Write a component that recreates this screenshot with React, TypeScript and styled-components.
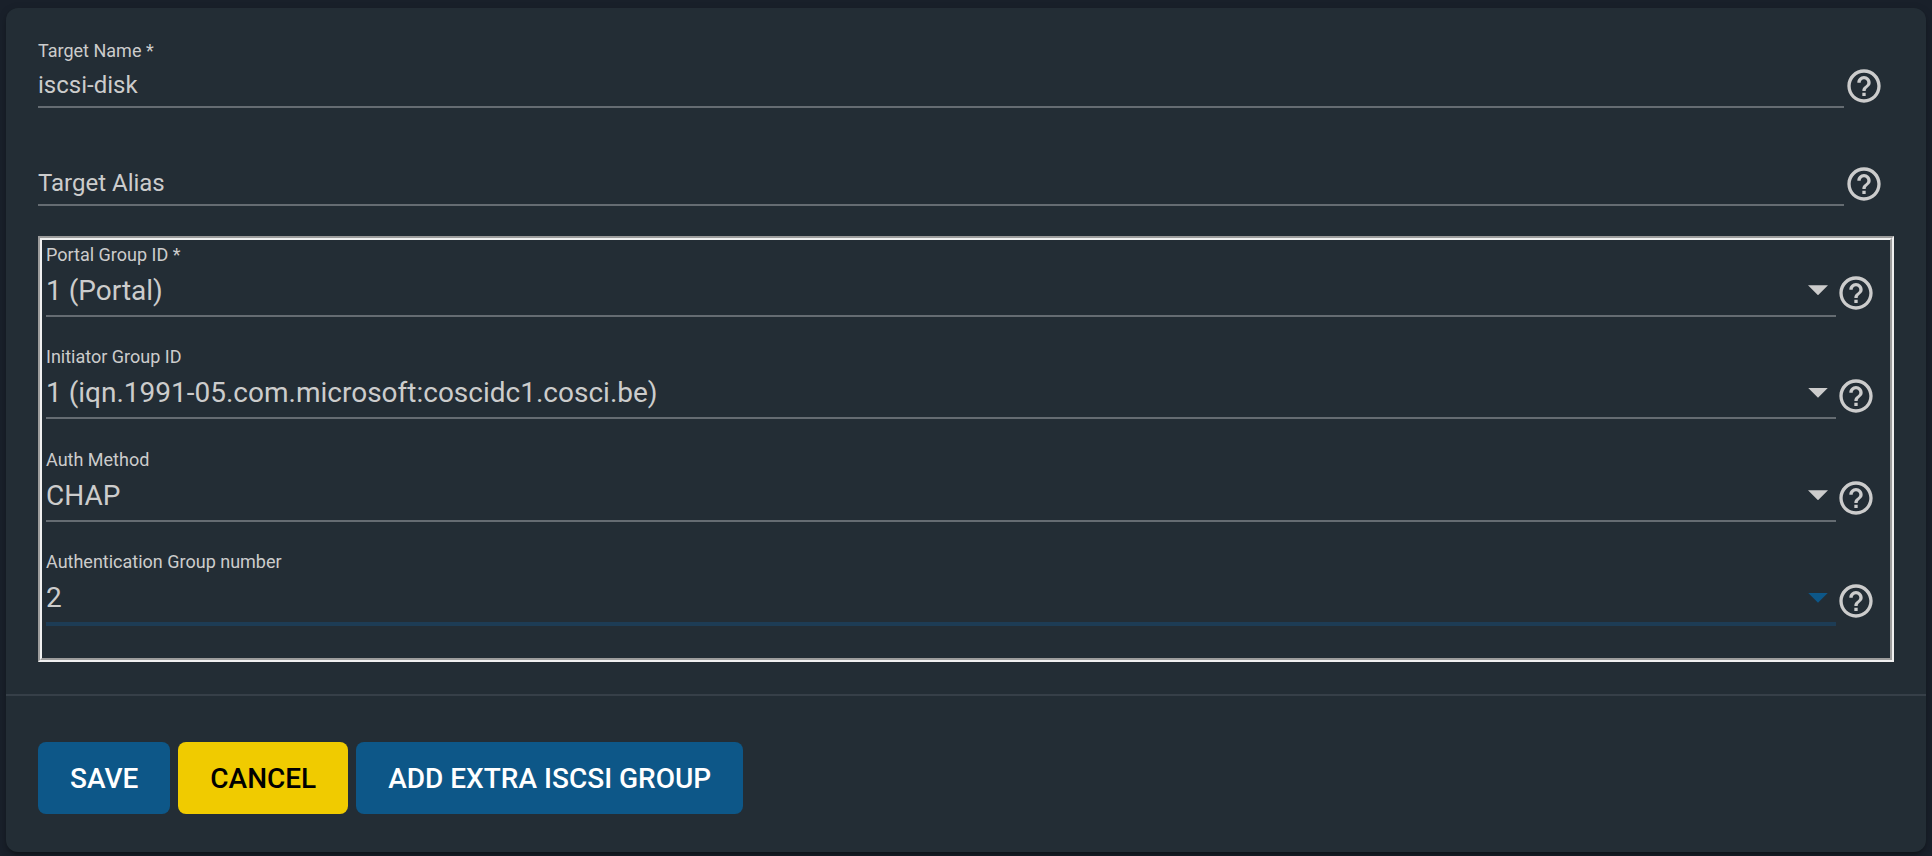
import React from "react";
import styled, { createGlobalStyle } from "styled-components";

const GlobalStyle = createGlobalStyle`
  html, body { margin: 0; background: #19202a; }
  body { overflow: hidden; font-family: Roboto, "Liberation Sans", sans-serif; color: #cccccc; }
  * { box-sizing: border-box; }
`;

const Page = styled.main`
  height: 856px;
  padding: 8px 6px 4px;
`;

const Card = styled.form`
  height: 844px;
  border-radius: 12px;
  background: #232d35;
  box-shadow: 0 6px 2px -4px rgba(0, 0, 0, 0.2), 0 4px 4px rgba(0, 0, 0, 0.14), 0 2px 10px rgba(0, 0, 0, 0.12);
`;

const Content = styled.div`
  height: 686px;
  padding: 33px 32px 0;
`;

const Row = styled.div<{ $height: number }>`
  display: flex;
  height: ${(p) => p.$height}px;
`;

const TextFields = styled.div`
  height: 195px;
  padding-right: 10px;
`;

const Field = styled.div`
  flex: 1;
`;

const Label = styled.div`
  height: 20px;
  font-size: 18px;
  line-height: 20px;
  white-space: nowrap;
`;

const TextValue = styled.div`
  height: 47px;
  padding-top: 10px;
  font-size: 24px;
  line-height: 28px;
  border-bottom: 2px solid #656c72;
`;

const SelectValue = styled.div<{ $focused?: boolean }>`
  display: flex;
  justify-content: space-between;
  height: ${(p) => (p.$focused ? 54 : 52)}px;
  padding: 10px 8px 0 0;
  font-size: 28px;
  line-height: 32px;
  border-bottom: ${(p) => (p.$focused ? "4px solid #1d3c55" : "2px solid #656c72")};
`;

const Arrow = styled.span<{ $focused?: boolean }>`
  width: 20px;
  height: 10px;
  margin-top: 10.3px;
  background: ${(p) => (p.$focused ? "#0d5788" : "#cccccc")};
  clip-path: polygon(0 0, 100% 0, 50% 100%);
`;

const Group = styled.fieldset`
  height: 426px;
  margin: 0;
  padding: 4.9px 14px 0 4px;
  border: 4px groove #f0f0f0;
`;

const HelpBox = styled.span<{ $top: number }>`
  display: flex;
  width: 40px;
  height: 40px;
  margin-top: ${(p) => p.$top}px;
  svg { flex: none; width: 40px; height: 40px; fill: #cccccc; }
`;

const Actions = styled.div`
  display: flex;
  gap: 8px;
  padding: 46px 32px 0;
  border-top: 2px solid #363f48;
`;

const Button = styled.button<{ $accent?: boolean }>`
  height: 72px;
  padding: 2px 32px 0;
  border: 0;
  border-radius: 8px;
  background: ${(p) => (p.$accent ? "#f0cb00" : "#0d5788")};
  color: ${(p) => (p.$accent ? "#000000" : "#ffffff")};
  font: 500 28px/70px Roboto, "Liberation Sans", sans-serif;
  text-transform: uppercase;
  white-space: nowrap;
`;

const Help = ({ top }: { top: number }) => (
  <HelpBox $top={top}>
    <svg viewBox="0 0 24 24">
      <path d="M11 18h2v-2h-2v2zm1-16C6.48 2 2 6.48 2 12s4.48 10 10 10 10-4.48 10-10S17.52 2 12 2zm0 18c-4.41 0-8-3.59-8-8s3.59-8 8-8 8 3.59 8 8-3.59 8-8 8zm0-14c-2.21 0-4 1.79-4 4h2c0-1.1.9-2 2-2s2 .9 2 2c0 2-3 1.75-3 5h2c0-2.25 3-2.5 3-5 0-2.21-1.79-4-4-4z" />
    </svg>
  </HelpBox>
);

const selects = [
  { label: "Portal Group ID *", value: "1 (Portal)" },
  { label: "Initiator Group ID", value: "1 (iqn.1991-05.com.microsoft:coscidc1.cosci.be)" },
  { label: "Auth Method", value: "CHAP" },
  { label: "Authentication Group number", value: "2", focused: true },
];

export default function App() {
  return (
    <Page>
      <GlobalStyle />
      <Card>
        <Content>
          <TextFields>
            <Row $height={98}>
              <Field>
                <Label>Target Name *</Label>
                <TextValue>iscsi-disk</TextValue>
              </Field>
              <Help top={25} />
            </Row>
            <Row $height={97}>
              <Field>
                <Label />
                <TextValue>Target Alias</TextValue>
              </Field>
              <Help top={25} />
            </Row>
          </TextFields>
          <Group>
            {selects.map((s) => (
              <Row $height={102.5} key={s.label}>
                <Field>
                  <Label>{s.label}</Label>
                  <SelectValue $focused={s.focused}>
                    <span>{s.value}</span>
                    <Arrow $focused={s.focused} />
                  </SelectValue>
                </Field>
                <Help top={28.3} />
              </Row>
            ))}
          </Group>
        </Content>
        <Actions>
          <Button type="button">Save</Button>
          <Button type="button" $accent>Cancel</Button>
          <Button type="button">Add extra iSCSI group</Button>
        </Actions>
      </Card>
    </Page>
  );
}
